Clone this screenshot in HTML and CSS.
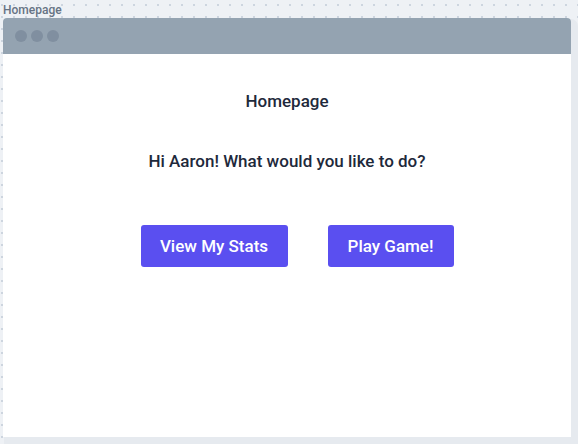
FILE: index.html
```html
<!DOCTYPE html>
<html>
<head>
<meta charset="utf-8">
<link rel="stylesheet" href="styles.css">
</head>
<body>
<div class="page-label">Homepage</div>
<div class="window">
  <div class="titlebar">
    <span class="dot"></span><span class="dot"></span><span class="dot"></span>
  </div>
  <div class="content">
    <h1 class="title">Homepage</h1>
    <p class="question">Hi Aaron! What would you like to do?</p>
    <div class="actions">
      <button class="btn btn-stats">View My Stats</button>
      <button class="btn btn-play">Play Game!</button>
    </div>
  </div>
</div>
</body>
</html>
```
FILE: styles.css
```css
html, body {
  margin: 0;
  padding: 0;
}
body {
  width: 578px;
  height: 444px;
  overflow: hidden;
  background-color: #eef1f5;
  background-image: radial-gradient(circle, #cdd5df 1px, transparent 1.2px);
  background-size: 12px 12px;
  background-position: -4px 11px;
  font-family: Roboto, "Liberation Sans", sans-serif;
}
.page-label {
  height: 18px;
  padding-left: 3px;
  font-size: 12px;
  line-height: 20px;
  color: #667384;
  font-weight: 500;
}
.window {
  margin-left: 3px;
  width: 568px;
  height: 419px;
  background: #fff;
  border-radius: 4px 4px 0 0;
  box-shadow: 4px 4px 0 3px #e6eaef;
  display: flex;
  flex-direction: column;
}
.titlebar {
  height: 36px;
  background: #94a3b1;
  border-radius: 4px 4px 0 0;
  display: flex;
  align-items: center;
  gap: 4px;
  padding-left: 12px;
}
.dot {
  width: 12px;
  height: 12px;
  border-radius: 50%;
  background: #808fa0;
}
.content {
  display: flex;
  flex-direction: column;
  align-items: center;
}
.title {
  margin: 36px 0 0;
  font-size: 17px;
  font-weight: 500;
  line-height: 22px;
  color: #1e293b;
}
.question {
  margin: 38px 0 0;
  font-size: 17px;
  font-weight: 500;
  line-height: 22px;
  color: #1e293b;
}
.actions {
  margin-top: 53px;
  margin-left: 20px;
  display: flex;
  gap: 40px;
}
.btn {
  height: 42px;
  border: none;
  border-radius: 3px;
  background: #5a4ff0;
  color: #fff;
  font-family: inherit;
  font-size: 17px;
  font-weight: 500;
  padding: 0;
}
.btn-stats { width: 147px; }
.btn-play { width: 126px; }
```
